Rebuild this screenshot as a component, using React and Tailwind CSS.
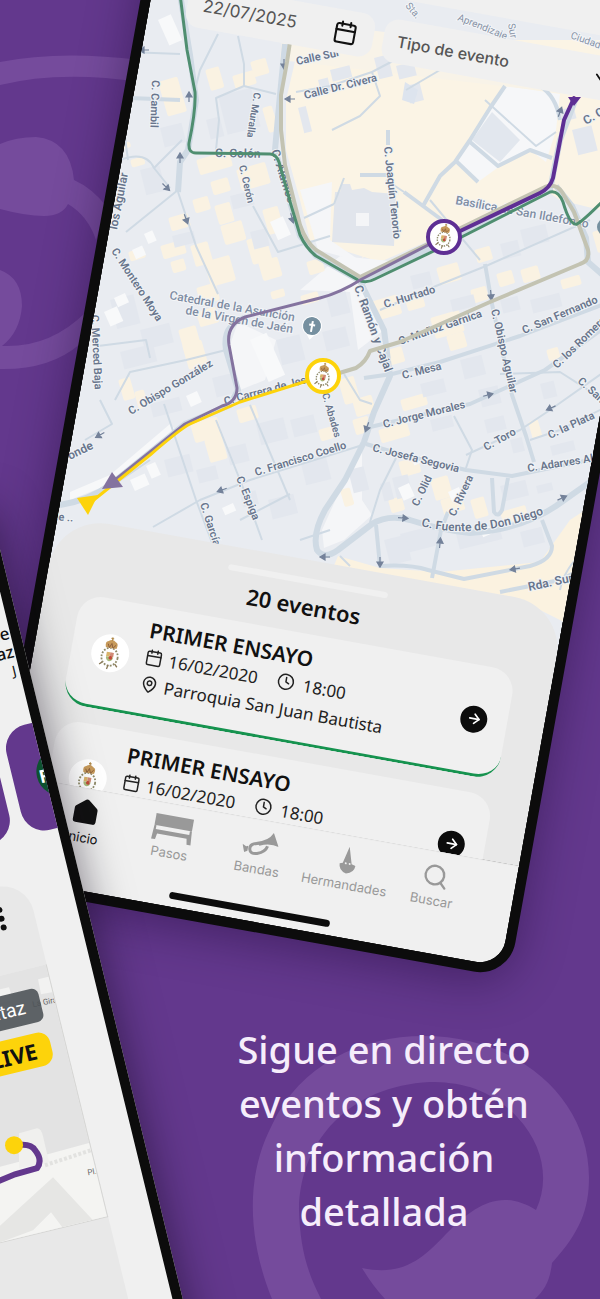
import React from "react";
import {
  ArrowRight,
  Calendar,
  ChevronDown,
  Clock,
  MapPin,
  Search,
} from "lucide-react";

const events = [
  { id: 1, title: "PRIMER ENSAYO", date: "16/02/2020", time: "18:00", place: "Parroquia San Juan Bautista" },
  { id: 2, title: "PRIMER ENSAYO", date: "16/02/2020", time: "18:00", place: "Parroquia San Juan Bautista" },
];

// street labels: text, x, y, angle, size
const streets = [
  ["C. Cambil", 152, 80, 92, 11],
  ["C. Muralla", 254, 92, 99, 10],
  ["C. Colón", 215, 157, 1, 12],
  ["C. Cerón", 239, 166, 77, 10],
  ["C. Alamos", 271, 151, 72, 12],
  ["Calle Sur", 297, 65, -12, 11],
  ["Calle Dr. Civera", 305, 99, -14, 11],
  ["C. Joaquín Tenorio", 384, 147, 84, 11],
  ["C. Castilla", 586, 125, -30, 12],
  ["los Aguilar", 117, 230, -79, 12],
  ["C. Montero Moya", 111, 251, 57, 11],
  ["C. Merced Baja", 91, 315, 87, 11],
  ["C. Obispo González", 131, 415, -31, 11],
  ["onde", 70, 460, -26, 12],
  ["C. Carrera de Jesús", 225, 405, -15, 11],
  ["C. Ramón y Cajal", 354, 287, 70, 12],
  ["C. Hurtado", 385, 308, -17, 11],
  ["C. Muñoz Garnica", 400, 345, -19, 11],
  ["C. Obispo Aguilar", 491, 310, 77, 11],
  ["C. Mesa", 403, 379, -14, 11],
  ["C. San Fernando", 524, 334, -23, 11],
  ["C. los Romeros", 557, 369, -44, 11],
  ["C. Jorge Morales", 384, 428, -14, 11],
  ["C. Josefa Segovia", 372, 451, 14, 11],
  ["C. Toro", 486, 451, -29, 11],
  ["C. la Plata", 550, 439, -25, 11],
  ["C. Santa", 577, 382, 42, 11],
  ["C. Adarves Altos", 528, 472, -9, 11],
  ["C. Olid", 418, 507, -64, 11],
  ["C. Rivera", 455, 517, -65, 11],
  ["Rda. Sur", 529, 591, -12, 12],
  ["C. Francisco Coello", 256, 476, -17, 11],
  ["C. Espiga", 236, 478, 68, 11],
  ["C. García", 200, 504, 72, 11],
  ["C. Abades", 322, 394, 74, 10],
  ["de ..", 52, 520, 4, 11],
];

// small cream blocks: x, y, w, h
const creamBlocks = [
  [158, 82, 20, 36], [205, 70, 14, 22], [232, 76, 22, 14], [222, 98, 14, 26],
  [250, 62, 16, 16], [262, 108, 10, 26], [196, 160, 34, 16], [210, 182, 18, 14],
  [236, 170, 30, 22], [192, 200, 16, 14], [214, 206, 16, 20], [168, 218, 20, 14],
  [160, 246, 24, 14], [190, 246, 18, 22], [220, 226, 22, 20], [170, 262, 14, 12],
  [196, 288, 20, 18], [204, 262, 26, 26], [178, 330, 18, 30], [182, 345, 20, 26],
  [196, 312, 20, 16], [118, 380, 12, 22], [134, 392, 10, 18], [190, 424, 28, 20],
  [204, 440, 18, 24], [236, 410, 20, 14], [246, 240, 20, 26], [262, 210, 16, 26],
  [258, 262, 20, 20], [130, 160, 14, 8], [128, 252, 16, 10], [120, 144, 10, 6],
  [370, 302, 28, 20], [436, 268, 22, 18], [404, 296, 18, 16], [470, 290, 16, 14],
  [430, 318, 30, 22], [380, 352, 22, 16], [446, 336, 18, 16], [400, 400, 26, 12],
  [352, 420, 16, 16], [338, 380, 16, 26], [352, 400, 20, 18], [378, 430, 30, 14],
  [398, 462, 20, 16], [430, 480, 18, 22], [440, 500, 22, 16], [318, 430, 14, 12],
  [340, 490, 10, 18], [388, 500, 14, 14], [470, 500, 14, 20], [520, 270, 18, 14],
  [546, 350, 12, 12], [528, 422, 10, 18], [496, 274, 16, 14], [592, 232, 12, 22],
  [560, 280, 20, 10], [474, 250, 16, 14], [306, 262, 16, 14], [300, 296, 18, 10],
  [500, 512, 26, 12], [270, 292, 14, 8],
];

// building footprints slightly darker than the ground: x, y, w, h
const buildings = [
  [140, 170, 20, 26], [160, 128, 22, 20], [218, 96, 34, 40], [206, 120, 14, 20],
  [172, 236, 22, 12], [230, 196, 22, 14], [250, 232, 16, 18], [110, 300, 24, 30],
  [140, 330, 30, 20], [120, 352, 34, 18], [150, 404, 30, 14], [212, 378, 22, 20],
  [164, 460, 26, 18], [196, 470, 20, 14], [226, 448, 20, 18], [256, 424, 28, 22],
  [268, 500, 26, 20], [240, 494, 16, 14], [290, 420, 24, 18], [300, 460, 26, 26],
  [276, 340, 24, 26], [326, 296, 20, 22], [322, 332, 24, 20], [410, 276, 20, 14],
  [450, 300, 24, 12], [500, 300, 18, 14], [420, 384, 24, 14], [460, 360, 22, 20],
  [478, 390, 20, 18], [430, 420, 22, 12], [484, 420, 20, 14], [540, 384, 14, 16],
  [530, 300, 30, 14], [392, 478, 16, 22], [348, 470, 16, 24], [380, 484, 10, 18],
  [510, 440, 12, 14], [550, 446, 24, 10], [500, 486, 26, 16], [536, 486, 16, 8],
  [400, 534, 38, 20], [384, 540, 22, 26], [456, 534, 44, 16], [520, 532, 22, 16],
  [520, 230, 26, 18], [500, 244, 18, 16], [572, 130, 20, 26], [406, 86, 14, 18],
  [396, 66, 18, 14], [374, 58, 14, 22], [318, 80, 10, 14], [298, 108, 8, 26],
  [560, 110, 14, 12], [330, 70, 20, 12],
];

const whiteBlocks = [
  [158, 20, 14, 28], [144, 234, 9, 11], [132, 250, 11, 10], [104, 312, 14, 16],
  [114, 298, 12, 10], [186, 396, 12, 12], [130, 480, 16, 12], [146, 466, 10, 14],
  [270, 222, 14, 20], [448, 492, 12, 10], [398, 488, 12, 14], [250, 340, 18, 46],
  [480, 530, 10, 8], [412, 460, 14, 6], [222, 508, 12, 8],
];

const mainRoads = [
  "M180 -6 L190 55 L196 100 L188 150 L180 162 L178 192",
  "M285 44 L280 95 L275 150 L290 202 L300 236 L316 256 L360 281",
  "M360 281 L430 248 L550 190 L560 140 L576 98",
  "M360 281 L384 330 L390 376 L374 412 L364 442 L345 480 L325 510 Q312 534 317 550 Q324 560 338 550 L372 524 Q388 514 410 520 Q440 530 470 533 Q520 530 556 506 L604 472",
  "M60 505 Q90 500 110 485 L185 424 L230 405 L238 390 L226 350 Q222 326 244 318",
  "M556 186 L572 206 L586 238 L588 262 L604 276",
];

const sideRoads = [
  "M376 525 L380 566 Q410 564 428 570 L464 579 L530 566 Q552 560 552 546 L542 520",
  "M432 578 L441 530 L448 512",
  "M505 86 L490 108 L470 140 L455 162 L440 176 L423 206",
  "M470 142 L498 166 L530 150 L552 158",
  "M455 160 L478 182",
  "M388 130 V145",
  "M360 175 H390",
  "M404 192 L442 220",
  "M364 378 L392 374 L440 362 L520 336 L604 304",
  "M366 428 L400 420 L470 404 L545 370 L604 328",
  "M485 264 L492 304 L512 395 L526 436 L534 462",
  "M366 444 L400 454 L466 470 L512 476 L560 466 L600 458",
  "M492 478 L494 512 Q498 518 502 510 L508 478",
  "M130 98 L180 100",
  "M540 86 Q556 96 560 120",
  "M500 592 L560 580 L600 560",
];

const thinRoads = [
  "M178 192 L196 246 L218 294",
  "M128 52 L180 54", "M120 160 Q146 150 154 168 L170 188", "M178 190 L126 232",
  "M118 85 L128 160", "M182 140 L154 168",
  "M218 34 L200 70 L196 86", "M238 36 L244 64 L244 86 L276 94", "M244 86 L216 98 L219 120 L216 150",
  "M253 206 L278 252 L330 236", "M304 218 L334 204", "M334 204 L344 178",
  "M153 527 L200 500 L250 480 L366 444",
  "M164 404 L196 500 L214 548", "M216 420 L244 490 L262 540", "M250 405 L290 500",
  "M240 520 L290 494", "M115 400 L130 372 L186 360 L226 350",
  "M98 346 L146 340 L150 358", "M380 310 L436 286 L486 266 L590 220",
  "M344 374 L360 400 L372 404", "M396 458 L380 490 L370 522", "M454 416 L472 450 L466 468",
  "M466 455 L520 430 L550 410 L604 372", "M530 440 L560 430 L604 408", "M500 374 L560 372 L604 400",
  "M404 192 L386 180", "M485 100 L536 146 L556 132", "M430 200 L480 260",
  "M296 92 L330 86 L372 72 L380 96 L360 116 L332 130", "M372 72 L410 52", "M406 90 L440 70",
  "M85 440 L112 424 L100 400", "M300 540 L330 530", "M340 556 L350 566",
  "M560 590 Q566 560 600 540", "M60 504 L100 494 L150 460",
];

// traffic direction arrows: x, y, angle
const arrows = [
  [144, 50, 180], [189, 97, -90], [180, 158, -90], [166, 187, 45], [186, 219, 70],
  [290, 99, 180], [284, 64, 90], [292, 218, 75], [560, 112, -70], [491, 295, 85],
  [100, 435, 150], [222, 490, 160], [488, 395, -15], [551, 408, 155], [367, 427, 110],
  [403, 518, 5], [440, 543, -85], [380, 562, 90], [515, 569, 170], [562, 498, -25], [325, 557, 180],
];

function Crest() {
  return (
    <g>
      <ellipse cx="20" cy="24" rx="9" ry="10" fill="none" stroke="#8f8b6a" strokeWidth="2" strokeDasharray="2 1.6" />
      <path d="M20 33 L19 38 M13 31 L10 34 M27 31 L30 34" stroke="#8a7a58" strokeWidth="1.5" />
      <path d="M14 14 Q12 8 16 7 Q20 3 24 7 Q28 8 26 14 Z" fill="#c79a5b" />
      <path d="M16 10 L18 14 L20 9 L22 14 L25 10" stroke="#8b5e3c" strokeWidth="1" fill="none" />
      <path d="M20 2 V6 M18.5 3.5 H21.5" stroke="#b08a4a" strokeWidth="1.2" />
      <rect x="16" y="19" width="4" height="5" fill="#d9b36a" />
      <rect x="20" y="19" width="4" height="5" fill="#d08a75" />
      <path d="M16 24 H24 Q24 28 20 29 Q16 28 16 24 Z" fill="#a9bb7c" />
      <circle cx="21" cy="25" r="2" fill="#c24a3a" />
    </g>
  );
}

function RouteMarker({ x, y, color }) {
  return (
    <g transform={`translate(${x} ${y})`}>
      <circle r="16" fill="#fff" stroke={color} strokeWidth="4" />
      <g transform="rotate(10.2) scale(0.7) translate(-20 -21)">
        <Crest />
      </g>
    </g>
  );
}

function CityMap() {
  return (
    <svg className="absolute left-0 top-0" width="516" height="800" viewBox="0 0 516 800" aria-label="Mapa de Jaén">
      <rect width="516" height="800" fill="#e9ecf1" />
      <g transform="translate(526 1090) rotate(-10.2) translate(-509 -978)">
        <path d="M300 40 L620 40 L620 215 L560 200 L545 190 L380 262 L310 240 L300 200 L286 150 L286 100 Z" fill="#fbf4e5" />
        <path d="M420 105 L470 140 L440 176 L400 240 L362 258 Z" fill="#fbf4e5" />
        <path d="M506 86 L560 94 L556 130 L546 162 L530 150 L500 166 L478 182 L455 162 L490 110 Z" fill="#f6f7f9" />
        <path d="M276 340 L238 322 L230 345 L240 390 L265 380 Z" fill="#f5f6f8" />
        <path d="M70 492 L110 475 L170 424 L176 430 L110 484 L70 500 Z" fill="#f7f8f9" />
        <path d="M340 256 L300 290 L350 292 L358 350 L384 330 L360 281 L400 262 Z" fill="#f5f6f8" />
        <path d="M362 450 L340 490 L322 530 L324 548 L344 540 L372 515 L362 500 Z" fill="#f5f6f8" />
        <path d="M338 556 L380 568 L440 572 L540 562 L570 520 L600 500 L600 640 L520 600 L330 575 Z" fill="#fbf2e0" />
        <path d="M300 190 L332 182 L330 240 L362 262 L318 250 Z" fill="#f5f6f8" />
        <path d="M284 20 L620 60 L620 100 L280 60 Z" fill="#f8f3e8" />
        {creamBlocks.map(([x, y, w, h], i) => (
          <rect key={i} x={x} y={y} width={w} height={h} rx="2" fill="#faf2e2" transform={`rotate(-16 ${x} ${y})`} />
        ))}
        {buildings.map(([x, y, w, h], i) => (
          <rect key={i} x={x} y={y} width={w} height={h} fill="#e3e7ee" transform={`rotate(-14 ${x} ${y})`} />
        ))}
        {whiteBlocks.map(([x, y, w, h], i) => (
          <rect key={i} x={x} y={y} width={w} height={h} fill="#f8f9fa" transform={`rotate(-24 ${x} ${y})`} />
        ))}
        <path d="M335 192 L340 192 L342 184 L350 184 L352 190 L364 188 L372 192 L396 194 L394 246 L332 242 Z" fill="#e1e5ec" />
        <rect x="356" y="213" width="13" height="13" fill="#f4f5f7" />
        <path d="M492 112 L520 140 L500 162 L472 140 Z" fill="#e2e7ee" />
        <path d="M405 82 L418 90 L414 104 L402 100 Z" fill="#dde4ee" />

        <g fill="none" stroke="#cfdae4" strokeLinejoin="round">
          {thinRoads.map((d) => <path key={d} d={d} strokeWidth="2" />)}
          {sideRoads.map((d) => <path key={d} d={d} strokeWidth="4" />)}
          {mainRoads.map((d) => <path key={d} d={d} strokeWidth="6" />)}
        </g>
        {arrows.map(([x, y, a]) => (
          <g key={`${x}-${y}`} transform={`translate(${x} ${y}) rotate(${a})`}>
            <path d="M-5 0 H3 M0 -3 L5 0 L0 3 Z" fill="#74829a" stroke="#74829a" strokeWidth="1.2" />
          </g>
        ))}

        <g fill="#68758c" fontFamily="Roboto, sans-serif" fontWeight="600" stroke="#f0f3f6" strokeWidth="2" paintOrder="stroke">
          {streets.map(([text, x, y, angle, size]) => (
            <text key={text} fontSize={size} transform={`translate(${x} ${y}) rotate(${angle})`}>{text}</text>
          ))}
          <path id="fuente" d="M421 526 Q480 542 556 509" fill="none" stroke="none" />
          <text fontSize="12"><textPath href="#fuente">C. Fuente de Don Diego</textPath></text>
        </g>
        <g fill="#8793a6" fontFamily="Roboto, sans-serif" fontSize="10" stroke="#f3f5f8" strokeWidth="2" paintOrder="stroke">
          <text transform="translate(457 20) rotate(22)">Aprendizaje</text>
          <text transform="translate(405 6) rotate(50)">Sta.</text>
          <text transform="translate(508 24) rotate(80)">Sur</text>
          <text transform="translate(570 38) rotate(20)">Ciudad</text>
        </g>
        <g fill="#7f8da3" fontFamily="Roboto, sans-serif" fontSize="12" fontWeight="500" stroke="#f3f5f8" strokeWidth="2" paintOrder="stroke">
          <text transform="translate(169 299) rotate(10.2)">Catedral de la Asunción</text>
          <text transform="translate(185 314) rotate(10.2)">de la Virgen de Jaén</text>
          <text transform="translate(455 204) rotate(10.2)">Basílica de San Ildefonso</text>
        </g>

        <g fill="none" strokeLinejoin="round" strokeLinecap="round">
          <path d="M290 42 L287 62 L281 95 L281 130 L285 165 L300 225 Q306 242 316 250 L360 277 L430 243 L545 187 Q556 183 562 192 L574 212 L588 250 Q590 261 580 264 L490 302 L400 342 L370 351 Q366 362 356 368 L336 374" stroke="#c3c3b2" strokeWidth="4" />
          <path d="M180 -6 L187 50 L195 92 Q196 110 189 143 Q188 153 196 153 L270 154 Q276 154 279 162 L291 205 L300 235 Q306 248 316 256 L358 280 Q366 284 375 279 L440 248 L550 192 Q558 190 563 202 Q570 226 577 224 Q582 222 604 200" stroke="#4f8e70" strokeWidth="3" />
          <path d="M432 243 L362 279 Q340 293 320 298 L245 317 Q226 325 229 345 L237 388 Q237 402 222 406 L185 424 L115 480" stroke="#84739f" strokeWidth="3" />
          <path d="M574 98 L564 120 L553 178 Q550 188 540 193 L456 233" stroke="#5e2f94" strokeWidth="4" />
          <path d="M323 376 L240 402 L190 424 Q180 429 150 455 L90 503" stroke="#fdd30b" strokeWidth="3" />
        </g>
        <path d="M112 472 L123 487 L102 489 Z" fill="#84739f" />
        <path d="M77 498 L98 495 L88 515 Z" fill="#fdd30b" />
        <path d="M568 97 L581 97 L574 106 Z" fill="#5e2f94" />
        <g transform="translate(312 326) rotate(10.2)">
          <path d="M0 14 L-6 6 H6 Z" fill="#fff" />
          <circle r="10" fill="#fff" />
          <circle r="9" fill="#7690a0" />
          <path d="M0 -5 V6 M-3 -1 H3" stroke="#fff" strokeWidth="2" />
        </g>
        <circle cx="606" cy="227" r="9" fill="#7690a0" />
        <RouteMarker x={444} y={237} color="#5e2f94" />
        <RouteMarker x={323} y={376} color="#fdd30b" />
      </g>
    </svg>
  );
}

function EventCard({ event }) {
  return (
    <article className="flex h-[111px] shrink-0 items-center rounded-[24px] border-b-[3px] border-[#16934f] bg-[#f0f0f0] px-5">
      <div className="flex h-[38px] w-[38px] shrink-0 items-center justify-center rounded-full bg-white">
        <svg width="36" height="36" viewBox="0 0 40 40" aria-hidden="true">
          <Crest />
        </svg>
      </div>
      <div className="ml-4 flex-1 pb-1.5 text-[17px] leading-[27px] text-[#222]">
        <h3 className="text-[21px] font-semibold leading-[27px] text-[#111]">{event.title}</h3>
        <div className="flex items-center">
          <Calendar size={18} strokeWidth={2} />
          <span className="ml-1.5">{event.date}</span>
          <Clock size={18} strokeWidth={2} className="ml-5" />
          <span className="ml-2">{event.time}</span>
        </div>
        <div className="flex items-center">
          <MapPin size={18} strokeWidth={2} />
          <span className="ml-1.5">{event.place}</span>
        </div>
      </div>
      <button className="flex h-[27px] w-[27px] items-center justify-center rounded-full bg-[#0c0c0c] text-white" aria-label="Ver evento">
        <ArrowRight size={16} strokeWidth={2.5} />
      </button>
    </article>
  );
}

const HomeIcon = () => (
  <svg className="mb-1" width="26" height="26" viewBox="0 0 28 28" fill="currentColor" aria-hidden="true">
    <path d="M12.4 1.6 Q14 0.4 15.6 1.6 L25.4 9.4 Q26.4 10.2 26.4 11.6 V24 Q26.4 27 23.4 27 H4.6 Q1.6 27 1.6 24 V11.6 Q1.6 10.2 2.6 9.4 Z" />
  </svg>
);

const PasoIcon = () => (
  <svg width="42" height="28" viewBox="0 0 42 28" fill="currentColor" aria-hidden="true">
    <path d="M2 1 H40 V13 H2 Z" />
    <path d="M2 13 H4 V17 H38 V13 H40 L41 27 H37 L36 21 H6 L5 27 H1 Z" />
  </svg>
);

const TrumpetIcon = () => (
  <svg width="36" height="28" viewBox="0 0 36 28" aria-hidden="true">
    <path d="M29 0 L36 13 Q27 10 17 15 L13 12 Q25 9 29 0 Z" fill="currentColor" />
    <path d="M16 13 Q7 14 8 20 Q9 25 16 23 Q24 20 25 14" fill="none" stroke="currentColor" strokeWidth="3" />
    <path d="M0 16 L4 18 L6 17 L6 22 L3 24 Z" fill="currentColor" />
  </svg>
);

const HoodIcon = () => (
  <svg width="18" height="28" viewBox="0 0 18 28" fill="currentColor" aria-hidden="true">
    <path d="M8 0 L13 17 L17 18 Q17 25 9 27 Q1 25 1 18 L4 17 Z" />
    <circle cx="7" cy="17" r="1" fill="#f0f0f0" />
    <circle cx="11" cy="17" r="1" fill="#f0f0f0" />
  </svg>
);

const tabs = [
  { label: "Inicio", icon: <HomeIcon />, active: true },
  { label: "Pasos", icon: <PasoIcon /> },
  { label: "Bandas", icon: <TrumpetIcon /> },
  { label: "Hermandades", icon: <HoodIcon /> },
  { label: "Buscar", icon: <Search size={28} strokeWidth={2} /> },
];

function TabBar() {
  return (
    <nav className="relative shrink-0 border-t border-[#ebebeb] bg-[#f0f0f0] px-9 pb-2 pt-2 font-[Inter,sans-serif]">
      <div className="grid grid-cols-5">
        {tabs.map((tab) => (
          <button
            key={tab.label}
            className={`flex flex-col items-center text-[13px] leading-4 ${tab.active ? "text-[#111]" : "text-[#999]"}`}
          >
            <span className="flex h-8 items-center">{tab.icon}</span>
            {tab.label}
          </button>
        ))}
      </div>
      <div className="mx-auto mt-[30px] h-[7px] w-[163px] rounded-full bg-[#0c0c0c]" />
    </nav>
  );
}

function EventsPhone() {
  return (
    <div className="absolute -left-[27px] -top-[122px] flex h-[1100px] w-[536px] origin-bottom-right rotate-[10.2deg] overflow-hidden rounded-[36px] border-[10px] border-[#0c0c0c] bg-[#0c0c0c] shadow-[0_8px_48px_rgba(20,0,40,0.4)]">
      <div className="relative flex flex-1 flex-col overflow-hidden rounded-[26px]">
        <CityMap />
        <header className="relative h-[146px] shrink-0 bg-[#f0f0f0]" />
        <div className="relative mt-5 flex gap-2.5 px-[37px] font-[Inter,sans-serif] text-[#555]">
          <button className="flex h-11 w-[189px] items-center justify-between rounded-[14px] bg-[#f0f0f0] px-4 text-[17px]">
            22/07/2025
            <Calendar size={25} strokeWidth={2} className="text-[#111]" />
          </button>
          <label className="relative flex flex-1 items-center">
            <select aria-label="Tipo de evento" className="h-11 w-full appearance-none rounded-[14px] bg-[#f0f0f0] px-3.5 text-[16px] font-medium">
              <option>Tipo de evento</option>
            </select>
            <ChevronDown size={22} className="absolute right-2.5 text-[#111]" />
          </label>
        </div>
        <div className="flex-1" />
        <section className="relative flex h-[264px] shrink-0 flex-col overflow-hidden rounded-t-[52px] bg-[#e8e8e8] px-[37px] pt-[18px] font-['Noto_Sans',sans-serif]">
          <div className="mx-auto h-1.5 w-[162px] shrink-0 rounded-full bg-[#f0f0f0]" />
          <h2 className="mb-3 mt-2 text-center text-[22px] font-semibold leading-[29px] text-[#111]">20 eventos</h2>
          <div className="flex flex-col gap-4">
            {events.map((event) => (
              <EventCard key={event.id} event={event} />
            ))}
          </div>
        </section>
        <TabBar />
      </div>
    </div>
  );
}

function LiveMap() {
  return (
    <svg className="absolute right-0 top-0" width="300" height="260" viewBox="0 0 300 260" aria-hidden="true">
      <rect width="300" height="260" fill="#e3e3e3" />
      <g transform="translate(353 -465) rotate(13.7) translate(12 -500)">
        <path d="M-20 994 L10 987 L14 1000 L-20 1008 Z" fill="#f2f2f1" />
        <path d="M39 979 L60 974 L64 990 L42 994 Z" fill="#f2f2f1" />
        <path d="M-20 1172 L45 1155 L100 1140 L120 1220 L-20 1260 Z" fill="#f4f4f2" />
        <path d="M20 1133 L38 1128 Q42 1128 44 1136 L50 1162 L20 1168 Z" fill="#f0f0ee" />
        <path d="M-4 1230 L54 1177 L94 1220 L64 1228 L52 1212 L34 1230 L-4 1244 Z" fill="#e6e6e4" />
        <path d="M46 1165 L95 1149" stroke="#e2e2e0" strokeWidth="4" strokeDasharray="3 2" fill="none" />
        <path d="M-10 1185 L16 1174 L38 1168 Q44 1160 36 1150 Q32 1143 18 1145" fill="none" stroke="#63388d" strokeWidth="6" />
        <circle cx="15" cy="1145" r="9" fill="#fdd30b" />
        <g fill="#666" fontFamily="Roboto, sans-serif" fontSize="8">
          <text transform="translate(34 1007) rotate(-12)">La Giralda</text>
          <text transform="translate(89 1175) rotate(-10)">Pl.</text>
        </g>
      </g>
    </svg>
  );
}

function LivePhone() {
  return (
    <div className="absolute -left-[512px] top-[500px] flex h-[1000px] w-[500px] origin-top-right -rotate-[13.7deg] overflow-hidden border-[10px] border-[#0c0c0c] bg-[#f0f0f0] font-['Noto_Sans',sans-serif] shadow-[0_8px_44px_rgba(10,0,20,0.5)]">
      <div className="relative flex-1 overflow-hidden pt-[114px]">
        <div className="pr-px text-right text-[17px] font-medium leading-[19px] text-[#111]">
          <p>de</p>
          <p>az</p>
          <p className="pr-0.5 text-[14px] font-normal">J</p>
        </div>
        <div className="-mr-[76px] mt-[46px] flex justify-end gap-3">
          <div className="h-[108px] w-[108px] rounded-[24px] bg-[#63388d]" />
          <div className="flex h-[108px] w-[108px] items-center rounded-[24px] bg-[#63388d] pl-6">
            <div className="flex h-12 w-12 items-center rounded-full bg-[#0d5230] pl-0.5 text-[18px] font-bold leading-5 text-white">F</div>
          </div>
        </div>
        <div className="mr-[43px] mt-[43px] h-[700px] rounded-[32px] bg-[#e8e8e8]">
          <div className="flex h-[87px] justify-end pr-[30px] pt-5">
            <button className="flex h-6 flex-col justify-between" aria-label="Más opciones">
              <span className="h-1.5 w-1.5 rounded-full bg-[#111]" />
              <span className="h-1.5 w-1.5 rounded-full bg-[#111]" />
              <span className="h-1.5 w-1.5 rounded-full bg-[#111]" />
            </button>
          </div>
          <div className="relative h-[260px] overflow-hidden border border-l-0 border-t-0 border-[#d6d6d4]">
            <LiveMap />
            <div className="relative flex flex-col items-end gap-2.5 pr-3.5 pt-5">
              <span className="flex h-[34px] w-[160px] items-center justify-end rounded-[7px] bg-[#4e5358]/90 pr-4 font-[Roboto,sans-serif] text-[19px] text-white">
                ataz
              </span>
              <span className="flex h-[34px] w-[110px] items-center justify-end rounded-[12px] bg-[#fdd30b] pr-[15px] text-[22px] font-bold text-[#111]">
                LIVE
              </span>
            </div>
          </div>
        </div>
      </div>
    </div>
  );
}

function Watermarks() {
  return (
    <svg className="absolute bottom-0 left-0 h-[1299px] w-[600px]" viewBox="0 0 600 1299" fill="#754b9c" aria-hidden="true">
      <path d="M0 62 Q60 50 140 60 V82 Q60 70 0 85 Z" />
      <path d="M0 144 Q16 137 36 137 Q70 140 74 180 Q92 188 106 206 L96 240 Q88 216 68 204 Q62 216 44 216 Q26 216 0 209 Z" />
      <path d="M0 270 Q22 278 22 306 Q20 332 2 346 Q50 348 86 312 L80 344 Q50 370 0 369 Z" />
      <path d="M272 1299 C250 1245 243 1180 272 1125 C300 1065 360 1036 424 1036 C520 1036 589 1100 589 1177 C589 1210 580 1232 552 1263 C550 1280 545 1290 535 1299 H385 Q372 1285 362 1268 C400 1276 420 1262 446 1234 C475 1205 500 1188 536 1210 C550 1180 543 1145 518 1118 C490 1088 460 1082 430 1082 C350 1086 300 1140 299 1210 C300 1245 306 1270 321 1299 Z" />
    </svg>
  );
}

export default function App() {
  return (
    <main className="relative flex min-h-screen flex-col justify-end overflow-hidden bg-[#63388d]">
      <Watermarks />
      <EventsPhone />
      <LivePhone />
      <h1 className="relative mb-[61px] ml-[168px] px-16 text-center font-['Noto_Sans',sans-serif] text-[38px] font-medium leading-[54px] text-[#f6edfb]">
        Sigue en directo eventos y obtén información detallada
      </h1>
    </main>
  );
}
